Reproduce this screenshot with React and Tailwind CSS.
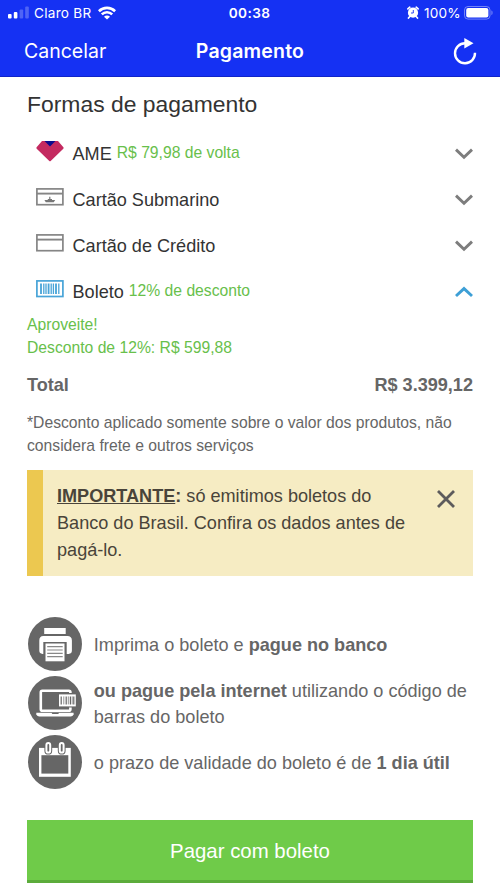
function SignalIcon() {
  return (
    <svg width="21" height="13" viewBox="0 0 21 13" fill="#fff">
      <rect x="0" y="8" width="3.6" height="4.5" rx="1" />
      <rect x="5.8" y="6" width="3.6" height="6.5" rx="1" />
      <rect x="11.6" y="3.5" width="3.6" height="9" rx="1" opacity="0.25" />
      <rect x="17.2" y="0.5" width="3.6" height="12" rx="1" opacity="0.25" />
    </svg>
  );
}

function WifiIcon() {
  return (
    <svg width="18" height="14" viewBox="0 0 18 14" fill="none" stroke="#fff" strokeWidth="2.6">
      <path d="M0.9 5.2a11.6 11.6 0 0 1 16.2 0" />
      <path d="M3.8 8.4a7.4 7.4 0 0 1 10.4 0" />
      <path d="M9 13.6 6 10.8a4 4 0 0 1 6 0z" fill="#fff" stroke="none" />
    </svg>
  );
}

function AlarmIcon() {
  return (
    <svg width="12" height="13" viewBox="0 0 12 13" fill="none">
      <circle cx="6" cy="6.7" r="5.1" fill="#fff" />
      <path d="M0.9 2.9 2.8 1.2M11.1 2.9 9.2 1.2M2.6 10.8 1.5 12M9.4 10.8l1.1 1.2" stroke="#fff" strokeWidth="1.7" strokeLinecap="round" />
      <path d="M6.3 4v3H4" stroke="#1531f3" strokeWidth="0.9" />
    </svg>
  );
}

function BatteryIcon() {
  return (
    <svg width="30" height="14" viewBox="0 0 30 14" fill="none">
      <rect x="0.5" y="0.5" width="25.5" height="12.6" rx="3.5" stroke="#fff" strokeOpacity="0.4" />
      <rect x="2.2" y="2" width="22.2" height="9.6" rx="2" fill="#fff" />
      <path d="M27.4 4.6c1.6.5 1.6 4 0 4.5z" fill="#fff" fillOpacity="0.4" />
    </svg>
  );
}

function ReloadIcon() {
  return (
    <svg width="24" height="27" viewBox="0 0 24 27" fill="none">
      <path d="M12.2 5.2a10 10 0 1 0 9.8 9.6" stroke="#fff" strokeWidth="2.4" />
      <path d="M11.3 0 20.5 5.2 11.3 10.4z" fill="#fff" />
    </svg>
  );
}

function AmeIcon() {
  return (
    <svg width="28" height="21" viewBox="0 0 28 21">
      <path d="M6 0h16l5.4 6.2q.6.8-.1 1.6L14.7 20q-.7.7-1.4 0L.7 7.8Q0 7 .6 6.2z" fill="#c42a60" />
      <path d="M8.5 0h11L14 5.4z" fill="#0b0b8c" />
    </svg>
  );
}

function CardIcon({ ship = false }) {
  return (
    <svg width="28" height="18" viewBox="0 0 28 18" fill="none" stroke="#858585">
      <rect x="0.9" y="0.9" width="26" height="15.8" strokeWidth="1.7" />
      <path d="M1 5.6h26" strokeWidth="1.9" />
      {ship && <path d="M8.4 12h3.4v-1.1h1.4V8.8h1.2v2.1h1.6V12h3.2l-1.5 2.3H9.8z" fill="#777" stroke="none" />}
    </svg>
  );
}

function BoletoIcon() {
  return (
    <svg width="28" height="18" viewBox="0 0 28 18" fill="none" stroke="#48a4d8">
      <rect x="0.9" y="0.9" width="26" height="15.6" strokeWidth="1.7" />
      <path d="M5 3.6v10.4M12.6 3.6v10.4M20 3.6v10.4" strokeWidth="1.8" />
      <path d="M7.8 3.6v10.4M10 3.6v10.4M15.2 3.6v10.4M17.4 3.6v10.4M22.8 3.6v10.4" strokeWidth="1.3" />
    </svg>
  );
}

function Chevron({ open }) {
  return (
    <svg width="18" height="12" viewBox="0 0 18 12" fill="none" stroke={open ? '#3d9fd6' : '#7d7d7d'} strokeWidth="2.9">
      <path d={open ? 'M1 10 9 2.6 17 10' : 'M1 1.6 9 9.2 17 1.6'} />
    </svg>
  );
}

function PrinterIcon() {
  return (
    <svg width="54" height="54" viewBox="0 0 54 54">
      <circle cx="27" cy="27" r="27" fill="#666" />
      <path d="M16.2 11h21.5v6H16.2z" fill="#fff" />
      <path d="M15.3 19h24q4.6 0 4.6 4.6v10q0 3.3-3.3 3.3h-26q-3.3 0-3.3-3.3v-10q0-4.6 4-4.6z" fill="#fff" />
      <path d="M15.3 25h23.4v19.2H15.3z" fill="#666" />
      <path d="M17.5 26.5h19v17.8h-19z" fill="#fff" />
      <path d="M19.2 29.7H34.7M19.2 33H34.7M19.2 36.3H34.7M19.2 39.6H34.7" stroke="#888" strokeWidth="1.2" />
    </svg>
  );
}

function LaptopIcon() {
  return (
    <svg width="54" height="54" viewBox="0 0 54 54" fill="none">
      <circle cx="27" cy="27" r="27" fill="#666" />
      <rect x="12.8" y="14.8" width="29.6" height="20" rx="1.5" stroke="#fff" strokeWidth="2.6" />
      <path d="M29.6 17h20v14.5h-20z" fill="#666" />
      <path d="M31 18.4h16.8v12H31z" fill="#fff" />
      <path d="M33.2 20.4v8M38.2 20.4v8M42.4 20.4v8M45.8 20.4v8" stroke="#666" strokeWidth="1.2" />
      <path d="M35.8 20.4v8M40.3 20.4v8M44.2 20.4v8" stroke="#666" strokeWidth="0.7" />
      <path d="M8.3 36.8H45.6v1.8q-1 1.9-3 1.9H11.3q-2 0-3-1.9z" fill="#fff" />
      <path d="M23.5 36.8h7.5l-.7 1.1h-6z" fill="#666" />
    </svg>
  );
}

function CalendarIcon() {
  return (
    <svg width="54" height="54" viewBox="0 0 54 54" fill="none">
      <circle cx="27" cy="27" r="27" fill="#666" />
      <path d="M11 12.9h31.8V41.8H11z" fill="#fff" />
      <path d="M13.4 20.2h26.9v18.4H13.4z" fill="#666" />
      <rect x="18.4" y="8" width="3.8" height="9.6" rx="1.9" fill="#666" stroke="#666" strokeWidth="4" />
      <rect x="31.8" y="8" width="3.8" height="9.6" rx="1.9" fill="#666" stroke="#666" strokeWidth="4" />
      <rect x="18.4" y="8" width="3.8" height="9.6" rx="1.9" stroke="#fff" strokeWidth="2" />
      <rect x="31.8" y="8" width="3.8" height="9.6" rx="1.9" stroke="#fff" strokeWidth="2" />
    </svg>
  );
}

const methods = [
  { name: 'AME', note: 'R$ 79,98 de volta', icon: <AmeIcon /> },
  { name: 'Cartão Submarino', icon: <CardIcon ship /> },
  { name: 'Cartão de Crédito', icon: <CardIcon /> },
  { name: 'Boleto', note: '12% de desconto', icon: <BoletoIcon />, open: true },
];

function MethodRow({ name, note, icon, open = false }) {
  return (
    <button className="flex h-[46px] w-full items-center pl-[9px] text-left">
      <span className="flex w-[36.5px] shrink-0 pb-1">{icon}</span>
      <span className="pt-0.5 text-[18.1px] leading-6 text-[#333]">{name}</span>
      {note && <span className="ml-[5px] text-[15.7px] leading-6 text-[#68c04b]">{note}</span>}
      <span className="ml-auto pt-px">
        <Chevron open={open} />
      </span>
    </button>
  );
}

export default function App() {
  return (
    <div className="flex h-[889px] w-[500px] flex-col overflow-hidden bg-white font-['Liberation_Sans',Arial,sans-serif] whitespace-nowrap">
      <header className="h-[77px] shrink-0 border-b border-[#1024c8] bg-[#1531f3] font-[Inter,sans-serif] text-white">
        <div className="grid h-[25px] grid-cols-3 items-center pr-[6px] pl-2 text-[13.6px] leading-5">
          <div className="flex items-center">
            <SignalIcon />
            <span className="mr-[6px] ml-[5px] tracking-[0.02em]">Claro BR</span>
            <WifiIcon />
          </div>
          <span className="pr-[3px] text-center font-semibold tracking-[0.03em]">00:38</span>
          <div className="flex items-center justify-end">
            <AlarmIcon />
            <span className="mr-[3px] ml-[5px] tracking-[0.02em]">100%</span>
            <BatteryIcon />
          </div>
        </div>
        <div className="grid h-[52px] grid-cols-3 items-center pr-[23px] pl-6 text-[19.5px] leading-6">
          <span className="pb-px">Cancelar</span>
          <span className="pr-px pb-px text-center font-semibold tracking-[0.01em]">Pagamento</span>
          <span className="flex justify-end">
            <ReloadIcon />
          </span>
        </div>
      </header>

      <main className="flex flex-col px-[27px]">
        <h1 className="flex h-[53px] items-center pt-px text-[22.9px] text-[#333]">Formas de pagamento</h1>
        {methods.map((m) => (
          <MethodRow key={m.name} {...m} />
        ))}

        <p className="-mt-px text-[15.7px] leading-[23px] text-[#68c04b]">
          Aproveite!
          <br />
          Desconto de 12%: R$ 599,88
        </p>
        <div className="mt-[14px] flex justify-between text-[18.1px] leading-6 font-bold text-[#666]">
          <span>Total</span>
          <span>R$ 3.399,12</span>
        </div>
        <p className="mt-[14px] text-[15.7px] leading-[23px] text-[#666]">
          *Desconto aplicado somente sobre o valor dos produtos, não
          <br />
          considera frete e outros serviços
        </p>

        <div className="mt-[12.5px] flex h-[106.5px] justify-between border-l-16 border-[#ecc850] bg-[#f6ecc3] pt-[13.5px] pr-[18px] pl-[14px] text-[#49443a]">
          <p className="text-[18.1px] leading-[27px]">
            <b className="underline">IMPORTANTE</b>
            <b>:</b> só emitimos boletos do
            <br />
            Banco do Brasil. Confira os dados antes de
            <br />
            pagá-lo.
          </p>
          <svg className="mt-[7px]" width="18" height="18" viewBox="0 0 18 18" stroke="#5d5b5c" strokeWidth="2.8">
            <path d="M1 1l16 16M17 1 1 17" />
          </svg>
        </div>

        <ul className="mt-[41px] flex flex-col gap-[5px] pl-[0.8px] text-[18.1px] leading-[26px] text-[#666]">
          <li className="flex items-center gap-3">
            <PrinterIcon />
            <span className="pt-px">
              Imprima o boleto e <b>pague no banco</b>
            </span>
          </li>
          <li className="flex items-center gap-3">
            <LaptopIcon />
            <span className="pt-px">
              <b>ou pague pela internet</b> utilizando o código de
              <br />
              barras do boleto
            </span>
          </li>
          <li className="flex items-center gap-3">
            <CalendarIcon />
            <span className="pt-px">
              o prazo de validade do boleto é de <b>1 dia útil</b>
            </span>
          </li>
        </ul>

        <button className="mt-[31px] h-[63px] border-b-3 border-[#5cac3b] bg-[#6fcb49] pt-0.5 text-[20.4px] text-white">Pagar com boleto</button>
      </main>
    </div>
  );
}
